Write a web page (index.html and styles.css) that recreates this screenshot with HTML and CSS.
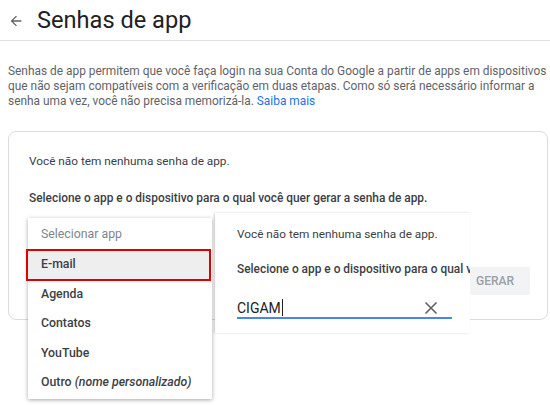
FILE: index.html
```html
<!DOCTYPE html>
<html lang="pt-BR">
  <head>
    <meta charset="UTF-8" />
    <meta name="viewport" content="width=device-width, initial-scale=1.0" />
    <title>Senhas de app</title>
    <link rel="stylesheet" href="styles.css">
  </head>
  <body>
    <header class="topbar">
      <svg class="back" width="16" height="16" viewBox="0 0 24 24">
        <path d="M20 11H7.83l5.59-5.59L12 4l-8 8 8 8 1.41-1.41L7.83 13H20v-2z" fill="#5f6368"/>
      </svg>
      <h1 class="title">Senhas de app</h1>
    </header>

    <p class="intro">
      Senhas de app permitem que você faça login na sua Conta do Google a partir de apps em dispositivos
      que não sejam compatíveis com a verificação em duas etapas. Como só será necessário informar a
      senha uma vez, você não precisa memorizá-la. <a href="#">Saiba mais</a>
    </p>

    <div class="stage">
      <section class="card">
        <p class="empty">Você não tem nenhuma senha de app.</p>
        <p class="select-hint">Selecione o app e o dispositivo para o qual você quer gerar a senha de app.</p>
      </section>

      <div class="panel">
        <p class="empty">Você não tem nenhuma senha de app.</p>
        <p class="select-hint">Selecione o app e o dispositivo para o qual você quer gerar a senha de app.</p>
        <div class="field">
          <span class="field-value">CIGAM<span class="caret"></span></span>
          <svg class="clear" width="14" height="14" viewBox="0 0 14 14">
            <path d="M1.5 1.5l11 11M12.5 1.5l-11 11" stroke="#5f6368" stroke-width="1.6"/>
          </svg>
        </div>
      </div>

      <button class="btn-gerar" disabled>GERAR</button>

      <ul class="menu">
        <li class="menu-item placeholder">Selecionar app</li>
        <li class="menu-item active">E-mail</li>
        <li class="menu-item">Agenda</li>
        <li class="menu-item">Contatos</li>
        <li class="menu-item">YouTube</li>
        <li class="menu-item">Outro <em>(nome personalizado)</em></li>
      </ul>
    </div>
  </body>
</html>
```

FILE: styles.css
```css
body {
  margin: 0;
  background-color: #fff;
  font-family: Roboto, "Noto Sans", sans-serif;
  color: #3c4043;
  width: 550px;
  height: 405px;
  overflow: hidden;
}
.topbar {
  display: flex;
  align-items: center;
  height: 40px;
  border-bottom: 1px solid #e0e0e0;
  padding-left: 8px;
}
.back {
  margin-right: 13px;
  margin-top: 1px;
}
.title {
  margin: 0;
  font-size: 23.6px;
  font-weight: 400;
  color: #202124;
}
.intro {
  margin: 23px 0 0 8px;
  width: 542px;
  font-size: 11.9px;
  line-height: 15px;
  color: #5f6368;
}
.intro a {
  color: #1a73e8;
  text-decoration: none;
}
.stage {
  position: relative;
  margin-top: 22px;
}
.card {
  margin-left: 8px;
  width: 540px;
  height: 189px;
  border: 1px solid #dadce0;
  border-radius: 8px;
  padding: 0 20px;
  box-sizing: border-box;
  overflow: hidden;
}
.empty {
  margin: 21px 0 0;
  font-size: 11.8px;
  line-height: 16px;
  white-space: nowrap;
}
.select-hint {
  margin: 21px 0 0;
  font-size: 11.9px;
  line-height: 16px;
  font-weight: 500;
  white-space: nowrap;
}
.panel {
  position: absolute;
  left: 215px;
  top: 82px;
  width: 255px;
  height: 120px;
  background-color: #fff;
  box-shadow: -1px 0 2px rgba(0, 0, 0, 0.18);
  padding: 13px 0 0 22px;
  box-sizing: border-box;
  overflow: hidden;
}
.panel .empty {
  margin-top: 0;
}
.panel .select-hint {
  margin-top: 19px;
}
.field {
  display: flex;
  align-items: center;
  justify-content: space-between;
  width: 215px;
  margin-top: 22px;
  padding-bottom: 1px;
  border-bottom: 2px solid #4a86e8;
}
.field-value {
  font-size: 14px;
  color: #202124;
  display: flex;
  align-items: center;
}
.caret {
  display: inline-block;
  width: 1px;
  height: 17px;
  background-color: #202124;
  margin-left: 1px;
}
.clear {
  margin-right: 14px;
}
.btn-gerar {
  position: absolute;
  left: 470px;
  top: 136px;
  width: 60px;
  height: 28px;
  border: none;
  border-radius: 2px;
  background-color: #f1f3f4;
  color: #9aa0a6;
  font-family: Roboto, "Noto Sans", sans-serif;
  font-size: 12px;
  font-weight: 500;
  text-align: left;
  padding: 0 0 0 6px;
}
.menu {
  position: absolute;
  left: 28px;
  top: 87px;
  width: 184px;
  margin: 0;
  padding: 0 0 1px;
  list-style: none;
  background-color: #fff;
  box-shadow: 0 1px 4px rgba(0, 0, 0, 0.35);
}
.menu-item {
  height: 29.5px;
  line-height: 29.5px;
  padding-left: 13px;
  font-size: 12.3px;
  font-weight: 500;
  color: #3c4043;
  white-space: nowrap;
}
.menu-item.placeholder {
  height: 32px;
  line-height: 32px;
  font-weight: 400;
  color: #80868b;
}
.menu-item.active {
  background-color: #eeeeee;
  outline: 2px solid #e00000;
  outline-offset: -1px;
  margin: 0 2px 0 -1px;
  padding-left: 14px;
}
.menu-item em {
  font-weight: 500;
}
```
